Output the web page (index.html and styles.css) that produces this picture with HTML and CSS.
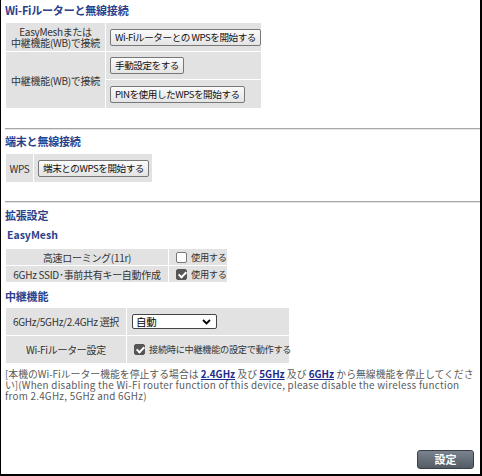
FILE: index.html
```html
<!DOCTYPE html>
<html lang="ja">
<head>
<meta charset="utf-8">
<link rel="stylesheet" href="styles.css">
</head>
<body>
<div class="frame">
  <h2 class="sec s1">Wi-Fiルーターと無線接続</h2>
  <table class="tbl t1">
    <tr class="h29">
      <th>EasyMeshまたは<br>中継機能(WB)で接続</th>
      <td><button class="btn">Wi-Fiルーターとの WPSを開始する</button></td>
    </tr>
    <tr class="h28">
      <th rowspan="2">中継機能(WB)で接続</th>
      <td><button class="btn">手動設定をする</button></td>
    </tr>
    <tr class="h29">
      <td><button class="btn">PINを使用したWPSを開始する</button></td>
    </tr>
  </table>
  <hr class="rule r1">
  <h2 class="sec s2">端末と無線接続</h2>
  <table class="tbl t2">
    <tr class="h29">
      <th>WPS</th>
      <td><button class="btn">端末とのWPSを開始する</button></td>
    </tr>
  </table>
  <hr class="rule r2">
  <h2 class="sec s3">拡張設定</h2>
  <h3 class="sub">EasyMesh</h3>
  <table class="tbl t3">
    <tr class="h17">
      <th>高速ローミング(11r)</th>
      <td><label class="chk"><span class="box"></span>使用する</label></td>
    </tr>
    <tr class="h17">
      <th>6GHz SSID･事前共有キー自動作成</th>
      <td><label class="chk"><span class="box on"></span>使用する</label></td>
    </tr>
  </table>
  <h2 class="sec s4">中継機能</h2>
  <table class="tbl t4">
    <tr class="h28">
      <th>6GHz/5GHz/2.4GHz 選択</th>
      <td><div class="sel"><span>自動</span><svg width="9" height="6" viewBox="0 0 9 6"><path d="M1 1 L4.5 4.5 L8 1" fill="none" stroke="#000" stroke-width="1.8"/></svg></div></td>
    </tr>
    <tr class="h28">
      <th>Wi-Fiルーター設定</th>
      <td><label class="chk chk2"><span class="box on"></span>接続時に中継機能の設定で動作する</label></td>
    </tr>
  </table>
  <p class="note">[本機のWi-Fiルーター機能を停止する場合は <a>2.4GHz</a> 及び <a>5GHz</a> 及び <a>6GHz</a> から無線機能を停止してください]<span class="en">(When disabling the Wi-Fi router function of this device, please disable the wireless function from 2.4GHz, 5GHz and 6GHz)</span></p>
  <div class="foot"><button class="submit">設定</button></div>
</div>
</body>
</html>
```
FILE: styles.css
```css
html, body { margin: 0; padding: 0; background: #fff; }
body { font-family: "Noto Sans CJK JP", "Liberation Sans", sans-serif; color: #333; }
.frame {
  width: 475px; height: 474px;
  border-left: 1px solid #000; border-right: 2px solid #000; border-bottom: 2px solid #000;
  padding-left: 4px; box-sizing: content-box; position: relative;
}
.sec { margin: 0; font-size: 11px; font-weight: bold; color: #2b3f8c; letter-spacing: -0.2px; }
.s1 { height: 22px; line-height: 20px; }
.s2 { height: 23px; line-height: 22px; }
.s3 { height: 24px; line-height: 24px; }
.s4 { height: 24px; line-height: 26px; }
.sub { margin: 0; font-size: 10.5px; font-weight: bold; color: #2b3f8c; height: 21px; line-height: 16px; padding-left: 2px; }
.tbl { border-collapse: collapse; table-layout: fixed; font-size: 10px; line-height: 11px; letter-spacing: -0.3px; }
.tbl th, .tbl td { background: #e2e2e2; border: 1px solid #fff; padding: 0; font-weight: normal; white-space: nowrap; }
.tbl th { text-align: center; color: #333; }
.tbl td { text-align: left; padding-left: 4px; }
.h29 { height: 29px; }
.h28 { height: 28px; }
.h17 { height: 17px; }
.btn {
  font-family: inherit; font-size: 9.6px; line-height: 11px; color: #111; letter-spacing: -0.45px;
  height: 17px; padding: 0 4px; border: 1px solid #777; border-radius: 2px;
  background: linear-gradient(#fbfbfb, #e4e4e4); margin: 0; white-space: nowrap;
}
.t1 { width: 257px; }
.t1 th { width: 99px; }
.t2 { width: 148px; }
.t2 th { width: 27px; }
.t3 { width: 223px; }
.t3 th { width: 162px; }
.t4 { width: 285px; }
.t4 th { width: 120px; }
.rule { border: 0; border-top: 1px solid #a8a8a8; border-bottom: 1px solid #e4e4e4; height: 0; margin: 0; }
.r1 { margin-top: 19px; }
.r2 { margin-top: 18px; }
.chk { display: flex; align-items: center; gap: 4px; color: #333; font-size: 9.2px; letter-spacing: -0.3px; }
.box { border: 1px solid #777; border-radius: 2px; background: #fff; position: relative; flex: none; box-sizing: border-box; width: 11px; height: 11px; }
.box.on { background: #555; border-color: #555; }
.box.on::after { content: ""; position: absolute; left: 3px; top: 0px; width: 3px; height: 6px; border: solid #fff; border-width: 0 2px 2px 0; transform: rotate(45deg); }
.t3 .chk { padding-left: 3px; }
.chk2 { padding-left: 3px; }
.sel { width: 75px; height: 13px; border: 1px solid #444; border-radius: 2px; background: #fff; display: flex; align-items: center; justify-content: space-between; padding: 0 5px 0 3px; margin-left: 1px; font-size: 10.5px; color: #000; }
.sel svg { display: block; }
.note { margin: 5px 0 0 0; font-size: 9.85px; line-height: 11px; color: #5a5a5a; padding-right: 1px; }
.note .en { letter-spacing: 0.25px; }
.note a { color: #1c2a8c; font-weight: bold; text-decoration: underline; display: inline-block; height: 11px; line-height: 11px; vertical-align: top; }
.foot { position: absolute; right: 6px; bottom: 5px; }
.submit {
  width: 57px; height: 19px; border: 1px solid #3a3f46; border-radius: 3px;
  background: linear-gradient(#7b838e, #535b66); color: #fff; font-weight: bold;
  font-family: inherit; font-size: 11px; padding: 0; line-height: 17px;
}
```
